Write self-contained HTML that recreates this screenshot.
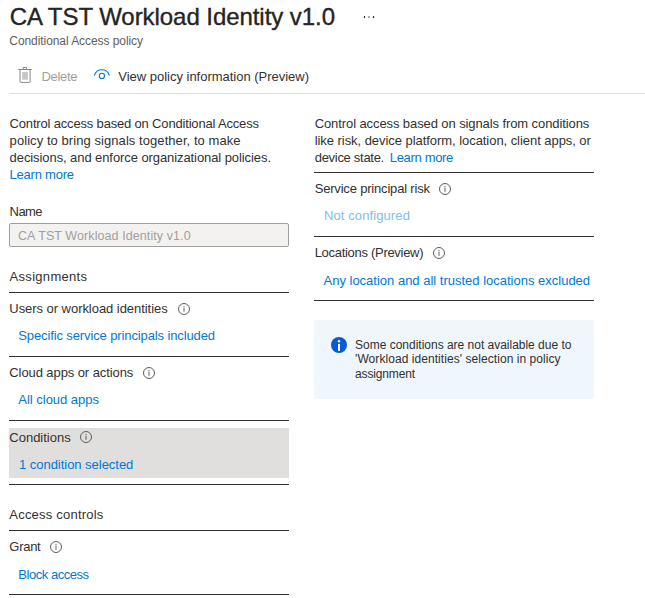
<!DOCTYPE html>
<html><head><meta charset="utf-8"><style>
html,body{margin:0;padding:0;background:#fff;width:645px;height:598px;overflow:hidden;position:relative}
body{font-family:"Liberation Sans",sans-serif}
.t{position:absolute;white-space:nowrap}
.ln{position:absolute;height:1px}
.ic{position:absolute;overflow:visible}
.box{position:absolute}
</style></head><body>
<div class="box" style="left:9px;top:428px;width:280px;height:50px;background:#e1dfdd"></div>
<div class="box" style="left:9px;top:223px;width:278px;height:22px;background:#f3f2f1;border:1px solid #a19f9d;border-radius:2px"></div>
<div class="box" style="left:314px;top:320px;width:280px;height:79px;background:#eff6fc;border-radius:2px"></div>
<svg class="ic" style="left:331px;top:337px" width="16" height="16" viewBox="0 0 16 16"><circle cx="8" cy="8" r="8" fill="#065ad8"/><rect x="7.05" y="6.9" width="1.9" height="7" fill="#fff"/><circle cx="8" cy="4.3" r="1.2" fill="#fff"/></svg>
<svg class="ic" style="left:14px;top:62px" width="22" height="24" viewBox="0 0 22 24">
<path d="M9.1 7 V5.5 H12.5 V7" fill="none" stroke="#8a8886" stroke-width="1"/>
<rect x="4.2" y="7" width="13.5" height="1" fill="#8a8886"/>
<path d="M6 8 V19.4 Q6 20.4 7 20.4 H15.1 Q16.1 20.4 16.1 19.4 V8" fill="none" stroke="#8a8886" stroke-width="1"/>
<rect x="8.2" y="10" width="5.7" height="7.7" fill="#c8c6c4"/>
</svg>
<svg class="ic" style="left:90px;top:64px" width="24" height="20" viewBox="0 0 24 20">
<path d="M4.4 11.3 A7.8 7.8 0 0 1 19.3 11.3" fill="none" stroke="#0078d4" stroke-width="1.05" stroke-linecap="round"/>
<circle cx="11.9" cy="11.9" r="2.6" fill="none" stroke="#0078d4" stroke-width="1.1"/>
</svg>
<svg class="ic" style="left:360px;top:12px" width="18" height="10" viewBox="0 0 18 10"><rect x="3.9" y="4" width="1.2" height="2" fill="#323130"/><rect x="8.4" y="4" width="1.2" height="2" fill="#7a7876"/><rect x="12.9" y="4" width="1.2" height="2" fill="#323130"/></svg>
<div class="t" style="left:9.80px;top:4.68px;font-size:24px;line-height:24px;letter-spacing:-0.058px;color:#252423;-webkit-text-stroke:0.35px #252423">CA TST Workload Identity v1.0</div>
<div class="t" style="left:9.30px;top:34.84px;font-size:12px;line-height:12px;letter-spacing:-0.071px;color:#605e5c;">Conditional Access policy</div>
<div class="t" style="left:41.40px;top:70.20px;font-size:13px;line-height:13px;letter-spacing:-0.277px;color:#a19f9d;">Delete</div>
<div class="t" style="left:118.30px;top:69.80px;font-size:13px;line-height:13px;letter-spacing:-0.016px;color:#323130;">View policy information (Preview)</div>
<div class="t" style="left:9.60px;top:117.00px;font-size:13px;line-height:13px;letter-spacing:-0.174px;color:#323130;">Control access based on Conditional Access</div>
<div class="t" style="left:9.60px;top:134.00px;font-size:13px;line-height:13px;letter-spacing:0.066px;color:#323130;">policy to bring signals together, to make</div>
<div class="t" style="left:9.60px;top:150.80px;font-size:13px;line-height:13px;letter-spacing:-0.083px;color:#323130;">decisions, and enforce organizational policies.</div>
<div class="t" style="left:9.60px;top:167.70px;font-size:13px;line-height:13px;letter-spacing:-0.231px;color:#0078d4;">Learn more</div>
<div class="t" style="left:9.60px;top:204.80px;font-size:13px;line-height:13px;letter-spacing:-0.561px;color:#323130;">Name</div>
<div class="t" style="left:18.00px;top:230.02px;font-size:12.5px;line-height:12.5px;letter-spacing:0.085px;color:#a19f9d;">CA TST Workload Identity v1.0</div>
<div class="t" style="left:9.60px;top:269.60px;font-size:13px;line-height:13px;letter-spacing:0.298px;color:#323130;">Assignments</div>
<div class="t" style="left:9.30px;top:302.30px;font-size:13px;line-height:13px;letter-spacing:-0.047px;color:#323130;">Users or workload identities</div>
<div class="t" style="left:18.30px;top:329.00px;font-size:13px;line-height:13px;letter-spacing:-0.119px;color:#0078d4;">Specific service principals included</div>
<div class="t" style="left:9.30px;top:366.30px;font-size:13px;line-height:13px;letter-spacing:-0.087px;color:#323130;">Cloud apps or actions</div>
<div class="t" style="left:18.30px;top:393.30px;font-size:13px;line-height:13px;letter-spacing:-0.018px;color:#0078d4;">All cloud apps</div>
<div class="t" style="left:9.30px;top:430.70px;font-size:13px;line-height:13px;letter-spacing:-0.003px;color:#323130;">Conditions</div>
<div class="t" style="left:19.00px;top:458.00px;font-size:13px;line-height:13px;letter-spacing:-0.032px;color:#0078d4;">1 condition selected</div>
<div class="t" style="left:9.30px;top:508.00px;font-size:13px;line-height:13px;letter-spacing:0.212px;color:#323130;">Access controls</div>
<div class="t" style="left:9.30px;top:540.00px;font-size:13px;line-height:13px;letter-spacing:-0.278px;color:#323130;">Grant</div>
<div class="t" style="left:18.30px;top:568.00px;font-size:13px;line-height:13px;letter-spacing:-0.469px;color:#0078d4;">Block access</div>
<div class="t" style="left:314.70px;top:117.00px;font-size:13px;line-height:13px;letter-spacing:-0.094px;color:#323130;">Control access based on signals from conditions</div>
<div class="t" style="left:314.70px;top:134.20px;font-size:13px;line-height:13px;letter-spacing:-0.052px;color:#323130;">like risk, device platform, location, client apps, or</div>
<div class="t" style="left:314.70px;top:150.50px;font-size:13px;line-height:13px;letter-spacing:-0.290px;color:#323130;">device state.</div>
<div class="t" style="left:389.80px;top:150.50px;font-size:13px;line-height:13px;letter-spacing:-0.331px;color:#0078d4;">Learn more</div>
<div class="t" style="left:314.70px;top:182.20px;font-size:13px;line-height:13px;letter-spacing:-0.187px;color:#323130;">Service principal risk</div>
<div class="t" style="left:323.90px;top:208.90px;font-size:13px;line-height:13px;letter-spacing:0.111px;color:#83bdea;">Not configured</div>
<div class="t" style="left:314.70px;top:246.20px;font-size:13px;line-height:13px;letter-spacing:-0.297px;color:#323130;">Locations (Preview)</div>
<div class="t" style="left:323.50px;top:273.70px;font-size:13px;line-height:13px;letter-spacing:-0.002px;color:#0078d4;">Any location and all trusted locations excluded</div>
<div class="t" style="left:355.10px;top:338.64px;font-size:12px;line-height:12px;letter-spacing:-0.013px;color:#323130;">Some conditions are not available due to</div>
<div class="t" style="left:355.10px;top:353.24px;font-size:12px;line-height:12px;letter-spacing:0.059px;color:#323130;">'Workload identities' selection in policy</div>
<div class="t" style="left:355.10px;top:367.84px;font-size:12px;line-height:12px;letter-spacing:-0.152px;color:#323130;">assignment</div>
<div class="ln" style="left:9px;top:93px;width:636px;background:#e1dfdd"></div>
<div class="ln" style="left:9px;top:292px;width:280px;background:#323130"></div>
<div class="ln" style="left:9px;top:356px;width:280px;background:#323130"></div>
<div class="ln" style="left:9px;top:420px;width:280px;background:#323130"></div>
<div class="ln" style="left:9px;top:484px;width:280px;background:#323130"></div>
<div class="ln" style="left:9px;top:530px;width:280px;background:#323130"></div>
<div class="ln" style="left:9px;top:594px;width:280px;background:#323130"></div>
<div class="ln" style="left:314px;top:172px;width:280px;background:#323130"></div>
<div class="ln" style="left:314px;top:236px;width:280px;background:#323130"></div>
<div class="ln" style="left:314px;top:300px;width:280px;background:#323130"></div>
<svg class="ic" style="left:177.00px;top:302.00px" width="14" height="14" viewBox="0 0 14 14"><circle cx="7" cy="7" r="5.5" fill="none" stroke="#605e5c" stroke-width="1"/><rect x="6.5" y="5.6" width="1" height="4.2" fill="#605e5c"/><rect x="6.5" y="3.9" width="1" height="1" fill="#605e5c"/></svg>
<svg class="ic" style="left:141.80px;top:365.70px" width="14" height="14" viewBox="0 0 14 14"><circle cx="7" cy="7" r="5.5" fill="none" stroke="#605e5c" stroke-width="1"/><rect x="6.5" y="5.6" width="1" height="4.2" fill="#605e5c"/><rect x="6.5" y="3.9" width="1" height="1" fill="#605e5c"/></svg>
<svg class="ic" style="left:78.80px;top:430.30px" width="14" height="14" viewBox="0 0 14 14"><circle cx="7" cy="7" r="5.5" fill="none" stroke="#605e5c" stroke-width="1"/><rect x="6.5" y="5.6" width="1" height="4.2" fill="#605e5c"/><rect x="6.5" y="3.9" width="1" height="1" fill="#605e5c"/></svg>
<svg class="ic" style="left:49.20px;top:540.00px" width="14" height="14" viewBox="0 0 14 14"><circle cx="7" cy="7" r="5.5" fill="none" stroke="#605e5c" stroke-width="1"/><rect x="6.5" y="5.6" width="1" height="4.2" fill="#605e5c"/><rect x="6.5" y="3.9" width="1" height="1" fill="#605e5c"/></svg>
<svg class="ic" style="left:438.00px;top:182.00px" width="14" height="14" viewBox="0 0 14 14"><circle cx="7" cy="7" r="5.5" fill="none" stroke="#605e5c" stroke-width="1"/><rect x="6.5" y="5.6" width="1" height="4.2" fill="#605e5c"/><rect x="6.5" y="3.9" width="1" height="1" fill="#605e5c"/></svg>
<svg class="ic" style="left:432.00px;top:246.20px" width="14" height="14" viewBox="0 0 14 14"><circle cx="7" cy="7" r="5.5" fill="none" stroke="#605e5c" stroke-width="1"/><rect x="6.5" y="5.6" width="1" height="4.2" fill="#605e5c"/><rect x="6.5" y="3.9" width="1" height="1" fill="#605e5c"/></svg>
</body></html>
